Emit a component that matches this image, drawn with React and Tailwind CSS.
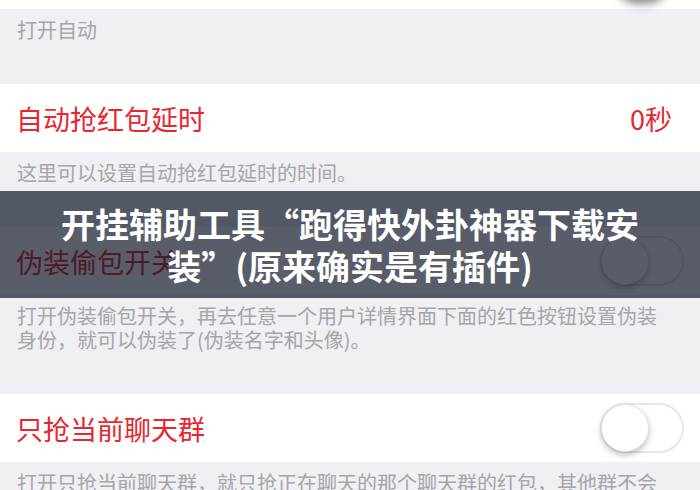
import React from 'react';

const cjk = { fontFamily: '"Noto Sans CJK SC", "Noto Sans", sans-serif' };

const Toggle = ({ on = false }) => (
  <div
    className={`relative w-[84px] h-[50px] rounded-full border-2 ${
      on ? 'bg-[#4cd964] border-[#4cd964]' : 'bg-white border-[#e6e6ea]'
    }`}
  >
    <div
      className={`absolute top-[-1px] w-[48px] h-[48px] rounded-full bg-white shadow-[0_3px_6px_rgba(0,0,0,0.25)] border border-[#e2e2e6] ${
        on ? 'right-[-1px]' : 'left-[-1px]'
      }`}
    />
  </div>
);

const Cell = ({ label, children, className = '' }) => (
  <div className={`h-[68px] bg-white flex items-center justify-between pl-[16px] pr-[16px] ${className}`}>
    <span className="text-[27px] text-[#e8262d] leading-none">{label}</span>
    {children}
  </div>
);

const Footer = ({ children }) => (
  <div className="pt-[9px] pb-[42px] pl-[17px] pr-[30px] text-[20px] leading-[24px] text-[#a5a5aa]">
    {children}
  </div>
);

export default function App() {
  return (
    <div className="relative w-[700px] h-[490px] overflow-hidden bg-[#efeff4]" style={cjk}>
      {/* settings list, first row scrolled mostly out of view */}
      <div className="flex flex-col">
        <Cell className="mt-[-59px] pr-[30px]">
          <div className="w-[56px] h-[48px] rounded-full bg-white shadow-[0_5px_8px_rgba(0,0,0,0.45)]" />
        </Cell>
        <Footer>打开自动</Footer>

        <Cell label="自动抢红包延时" className="pr-[28px]">
          <span className="text-[27px] text-[#e8262d] leading-none">0秒</span>
        </Cell>
        <Footer>这里可以设置自动抢红包延时的时间。</Footer>

        <Cell label="伪装偷包开关">
          <Toggle />
        </Cell>
        <Footer>
          打开伪装偷包开关，再去任意一个用户详情界面下面的红色按钮设置伪装身份，就可以伪装了(伪装名字和头像)。
        </Footer>

        <Cell label="只抢当前聊天群">
          <Toggle />
        </Cell>
        <Footer>打开只抢当前聊天群，就只抢正在聊天的那个聊天群的红包，其他群不会抢。</Footer>
      </div>

      {/* title banner over the screenshot */}
      <div className="absolute left-0 right-0 top-[191px] h-[107px] bg-[rgba(13,21,38,0.69)] flex items-center justify-center px-[52px]">
        <h1 className="text-white font-bold text-[34px] leading-[42px] text-center">
          开挂辅助工具“跑得快外卦神器下载安装”(原来确实是有插件)
        </h1>
      </div>
    </div>
  );
}
